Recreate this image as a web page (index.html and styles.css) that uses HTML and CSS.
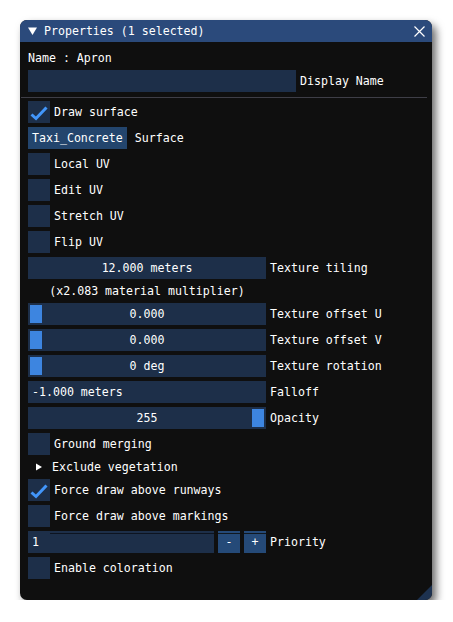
FILE: index.html
```html
<!DOCTYPE html>
<html>
<head>
<meta charset="utf-8">
<link rel="stylesheet" href="styles.css">
</head>
<body>
<div class="window">
  <div class="titlebar">
    <svg class="collapse" width="9" height="8" viewBox="0 0 9 8"><polygon points="0,0.5 9,0.5 4.5,8" fill="#fff"/></svg>
    <span class="title">Properties (1 selected)</span>
    <svg class="close" width="11" height="11" viewBox="0 0 11 11"><path d="M0.5 0.5 L10.5 10.5 M10.5 0.5 L0.5 10.5" stroke="#fff" stroke-width="1.2" fill="none"/></svg>
  </div>
  <div class="content">
    <div class="text-row">Name : Apron</div>
    <div class="row"><div class="frame display"></div><span class="label">Display Name</span></div>
    <div class="separator"></div>
    <div class="row"><div class="checkbox"><svg width="22" height="22" viewBox="0 0 22 22"><path d="M3.5 13.5 L8 17.5 L18.5 6.5" stroke="#4296fa" stroke-width="3" fill="none"/></svg></div><span class="label">Draw surface</span></div>
    <div class="row"><div class="button surface-btn">Taxi_Concrete</div><span class="label wide-gap">Surface</span></div>
    <div class="row"><div class="checkbox"></div><span class="label">Local UV</span></div>
    <div class="row"><div class="checkbox"></div><span class="label">Edit UV</span></div>
    <div class="row"><div class="checkbox"></div><span class="label">Stretch UV</span></div>
    <div class="row"><div class="checkbox"></div><span class="label">Flip UV</span></div>
    <div class="row"><div class="frame slider">12.000 meters</div><span class="label">Texture tiling</span></div>
    <div class="text-row centered">(x2.083 material multiplier)</div>
    <div class="row"><div class="frame slider"><span class="grab left"></span>0.000</div><span class="label">Texture offset U</span></div>
    <div class="row"><div class="frame slider"><span class="grab left"></span>0.000</div><span class="label">Texture offset V</span></div>
    <div class="row"><div class="frame slider"><span class="grab left"></span>0 deg</div><span class="label">Texture rotation</span></div>
    <div class="row"><div class="frame slider left-text">-1.000 meters</div><span class="label">Falloff</span></div>
    <div class="row"><div class="frame slider"><span class="grab right"></span>255</div><span class="label">Opacity</span></div>
    <div class="row"><div class="checkbox"></div><span class="label">Ground merging</span></div>
    <div class="text-row tree"><svg class="arrow" width="6" height="8" viewBox="0 0 6 8"><polygon points="0,0.5 6,4 0,7.5" fill="#fff"/></svg><span>Exclude vegetation</span></div>
    <div class="row"><div class="checkbox"><svg width="22" height="22" viewBox="0 0 22 22"><path d="M3.5 13.5 L8 17.5 L18.5 6.5" stroke="#4296fa" stroke-width="3" fill="none"/></svg></div><span class="label">Force draw above runways</span></div>
    <div class="row"><div class="checkbox"></div><span class="label">Force draw above markings</span></div>
    <div class="row">
      <div class="priority-group">
        <div class="frame priority-input">1</div>
        <div class="button step">-</div>
        <div class="button step">+</div>
      </div>
      <span class="label">Priority</span>
    </div>
    <div class="row"><div class="checkbox"></div><span class="label">Enable coloration</span></div>
  </div>
  <div class="grip"></div>
</div>
</body>
</html>
```
FILE: styles.css
```css
html, body {
  margin: 0;
  padding: 0;
  background: #ffffff;
}
body {
  padding: 20px 0 0 20px;
  font-family: "DejaVu Sans Mono", "Liberation Mono", monospace;
  font-size: 11.6px;
  color: #ffffff;
}
.window {
  position: relative;
  width: 412px;
  height: 580px;
  background: #0f0f0f;
  border-radius: 7px;
  box-shadow: 4px 5px 8px rgba(0, 0, 0, 0.6);
  overflow: hidden;
}
.titlebar {
  height: 22px;
  background: #2b4a7b;
  display: flex;
  align-items: center;
  padding: 0 8px;
}
.collapse {
  margin-right: 7px;
  margin-top: 0px;
}
.title {
  flex: 1;
  line-height: 22px;
}
.close {
  margin-right: -1px;
}
.content {
  padding: 8px;
  display: flex;
  flex-direction: column;
  gap: 4px;
}
.text-row {
  height: 16px;
  line-height: 16px;
  white-space: pre;
}
.text-row.centered {
  width: 238px;
  text-align: center;
}
.tree {
  display: flex;
  align-items: center;
}
.arrow {
  margin-left: 8px;
  margin-right: 10px;
}
.row {
  display: flex;
  align-items: center;
  height: 22px;
  gap: 4px;
}
.label {
  line-height: 22px;
  white-space: pre;
}
.label.wide-gap {
  margin-left: 4px;
}
.frame {
  height: 22px;
  background: #1d2f49;
  line-height: 22px;
  box-sizing: border-box;
  white-space: pre;
}
.frame.display {
  width: 268px;
}
.slider {
  position: relative;
  width: 238px;
  text-align: center;
}
.slider.left-text {
  text-align: left;
  padding-left: 4px;
}
.grab {
  position: absolute;
  top: 2px;
  width: 12px;
  height: 18px;
  background: #3d85e0;
}
.grab.left {
  left: 2px;
}
.grab.right {
  right: 2px;
}
.checkbox {
  width: 22px;
  height: 22px;
  background: #1d2f49;
}
.checkbox svg {
  display: block;
}
.button {
  height: 22px;
  line-height: 22px;
  background: #23456d;
  padding: 0 4px;
  white-space: pre;
}
.priority-group {
  display: flex;
  gap: 4px;
  width: 238px;
}
.priority-input {
  position: relative;
  width: 186px;
  padding-left: 4px;
}
.priority-input::before {
  content: "";
  position: absolute;
  left: 22px;
  right: 0;
  top: 2px;
  height: 1px;
  background: #0d1420;
}
.step {
  position: relative;
  width: 22px;
  padding: 0;
  text-align: center;
  background: #254a78;
}
.step::before {
  content: "";
  position: absolute;
  left: 0;
  right: 0;
  top: 2px;
  height: 1px;
  background: #101820;
}
.separator {
  height: 1px;
  background: #3e3e47;
  margin: 1px -3px -1px -7px;
}
.grip {
  position: absolute;
  right: 0;
  bottom: 0;
  width: 15px;
  height: 15px;
  background: #1d3250;
  clip-path: polygon(100% 0, 100% 100%, 0 100%);
}
```
